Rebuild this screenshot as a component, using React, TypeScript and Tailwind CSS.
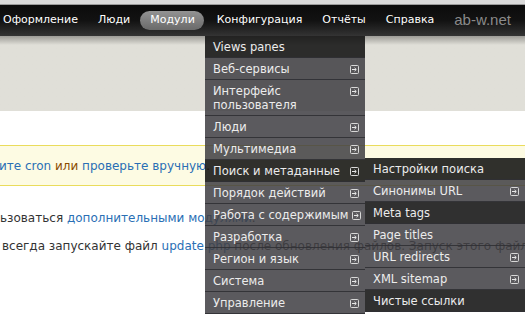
import clsx from 'clsx'

type Entry = { label: string; arrow?: boolean; dark?: boolean }

const MODULES: Entry[] = [
  { label: 'Views panes', dark: true },
  { label: 'Веб-сервисы', arrow: true },
  { label: 'Интерфейс\nпользователя', arrow: true },
  { label: 'Люди', arrow: true },
  { label: 'Мультимедиа', arrow: true },
  { label: 'Поиск и метаданные', arrow: true, dark: true },
  { label: 'Порядок действий', arrow: true },
  { label: 'Работа с содержимым', arrow: true },
  { label: 'Разработка', arrow: true },
  { label: 'Регион и язык', arrow: true },
  { label: 'Система', arrow: true },
  { label: 'Управление', arrow: true },
]

const SEARCH: Entry[] = [
  { label: 'Настройки поиска', dark: true },
  { label: 'Синонимы URL', arrow: true },
  { label: 'Meta tags', dark: true },
  { label: 'Page titles' },
  { label: 'URL redirects', arrow: true },
  { label: 'XML sitemap', arrow: true },
  { label: 'Чистые ссылки', dark: true },
]

function ArrowBox() {
  return (
    <svg width="9" height="9" viewBox="0 0 9 9" className="mt-[3px] shrink-0">
      <rect x="0.5" y="0.5" width="8" height="8" rx="1" fill="none" stroke="#d8d8d8" />
      <path d="M2 4.5h4M4.5 2.8l1.8 1.7-1.8 1.7" fill="none" stroke="#e8e8e8" strokeWidth="1" />
    </svg>
  )
}

function Menu({ items, className }: { items: Entry[]; className: string }) {
  return (
    <div className={clsx('absolute w-[160px]', className)}>
      {items.map((it) => (
        <div
          key={it.label}
          className={clsx(
            'flex items-start justify-between gap-1 pl-2 pr-[6px] pt-[4px] pb-[3px] text-[11.5px] leading-[14px] text-[#ececec] border-b border-[rgba(48,48,52,0.9)]',
            it.dark ? 'bg-[rgba(14,14,14,0.86)]' : 'bg-[rgba(64,63,68,0.86)]'
          )}
        >
          <span className="flex-1 whitespace-pre">{it.label}</span>
          {it.arrow && <ArrowBox />}
        </div>
      ))}
    </div>
  )
}

export default function App() {
  const nav = ['Оформление', 'Люди', 'Модули', 'Конфигурация', 'Отчёты', 'Справка']

  return (
    <div className="relative w-[525px] h-[324px] overflow-hidden bg-white font-['DejaVu_Sans',sans-serif]">
      <div className="h-[5px] bg-[#d9d9d9] border-b border-[#9a9a9a]" />

      <nav className="h-[31px] flex items-center whitespace-nowrap bg-gradient-to-b from-[#0b0b0b] via-[#121212] to-[#343434] text-[11px] text-white">
        <div className="flex items-center gap-[20px] pl-[3px]">
          {nav.map((n) =>
            n === 'Модули' ? (
              <span
                key={n}
                className="-ml-[10px] -mr-[7px] pl-[10px] pr-[9px] h-[19px] flex items-center rounded-full bg-gradient-to-b from-[#939393] to-[#6a6a6a]"
              >
                {n}
              </span>
            ) : (
              <span key={n}>{n}</span>
            )
          )}
        </div>
        <span className="ml-[20px] font-['Liberation_Sans',sans-serif] text-[15px] text-[#8a8a8a]">ab-w.net</span>
      </nav>

      <div className="h-[75px] bg-gradient-to-b from-[#9d9c97] via-[#e0dfd8] via-[12%] to-[#e0dfd8]" />

      <div className="pt-[34px] text-[12px]">
        <div className="h-[41px] flex items-center border-y border-[#eadc5c] bg-[#fdfbe3] text-[#8a4b00] -ml-[1px]">
          <span className="text-[#2a6fb5]">ите cron</span>
          <span>&nbsp;или&nbsp;</span>
          <span className="text-[#2a6fb5]">проверьте вручную</span>
          <span>.</span>
        </div>
        <p className="mt-[23px] text-[#333] whitespace-nowrap">
          ьзоваться <span className="text-[#2a6fb5]">дополнительными модулями</span>.
        </p>
        <p className="mt-[10px] ml-[2px] text-[#333] whitespace-nowrap">
          всегда запускайте файл <span className="text-[#2a6fb5]">update.php</span> после обновления файлов. Запуск этого файла поможет
        </p>
      </div>

      <Menu items={MODULES} className="left-[205px] top-[36px]" />
      <Menu items={SEARCH} className="left-[365px] top-[158px]" />
    </div>
  )
}
